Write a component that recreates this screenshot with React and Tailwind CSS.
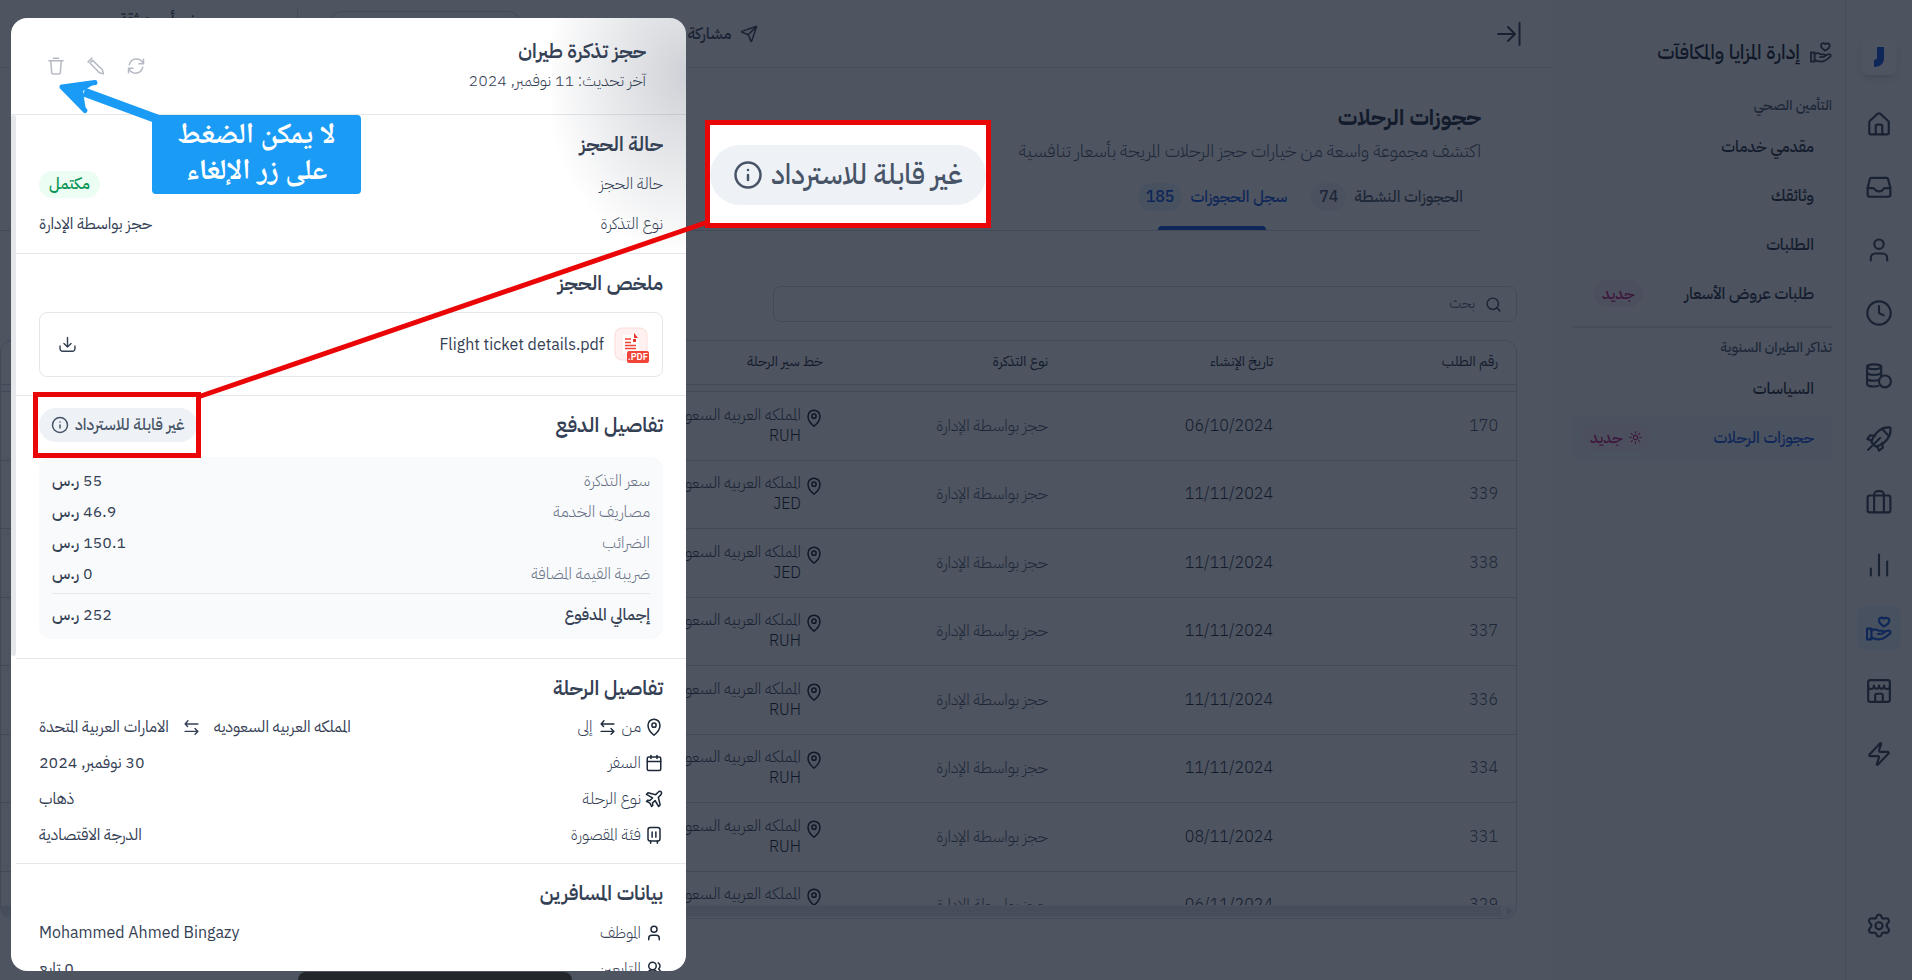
import {
  Calendar,
  ChartNoAxesColumn,
  Clock,
  Info,
  Search,
  Send,
  User,
  UsersRound,
  Zap,
} from 'lucide-react';

function Svg({ size = 26, width = 2, className, children }) {
  return (
    <svg width={size} height={size} viewBox="0 0 24 24" fill="none" stroke="currentColor" strokeWidth={width} strokeLinecap="round" strokeLinejoin="round" className={className}>
      {children}
    </svg>
  );
}

function HomeIcon() {
  return (
    <Svg>
      <path d="M3 10.5a2 2 0 0 1 .7-1.5l7-6.3a2 2 0 0 1 2.600 0l7 6.300a2 2 0 0 1 .7 1.500V20a1.500 1.500 0 0 1-1.500 1.500h-15A1.500 1.500 0 0 1 3 20z" />
      <path d="M9 21.500V14a1.500 1.500 0 0 1 1.500-1.500h3A1.500 1.500 0 0 1 15 14v7.500" />
    </Svg>
  );
}

function InboxIcon() {
  return (
    <Svg>
      <path d="M1.500 13h4.500c1.500 0 2 .5 2.500 1.500s1.500 1.500 3.500 1.500 3-.5 3.500-1.500S16.500 13 18 13h4.500" />
      <path d="M5 3.500h14a1.500 1.500 0 0 1 1.400 1l2.100 8.500v6a2 2 0 0 1-2 2h-17a2 2 0 0 1-2-2v-6l2.100-8.500a1.500 1.500 0 0 1 1.400-1z" />
    </Svg>
  );
}

function CoinsIcon() {
  return (
    <Svg>
      <ellipse cx="7.500" cy="3.500" rx="6.500" ry="2.200" />
      <path d="M1 3.500v16c0 1.200 3 2.200 6.500 2.200 1.500 0 2.700-.1 3.700-.4" />
      <path d="M14 3.500v8.500M1 8.800c0 1.200 3 2.200 6.500 2.200S14 10 14 8.800M1 14.200c0 1.200 3 2.200 6.500 2.200 1.400 0 2.500-.1 3.500-.4" />
      <circle cx="17.500" cy="17" r="5.500" />
    </Svg>
  );
}

function RocketIcon() {
  return (
    <Svg>
      <path d="M7.500 17.500 5 15c.8-3.500 3.500-8 7-10.800C15.500 1.500 19 1 22.500 1.500c.5 3.500 0 7-2.700 10.500C17 15.500 12.500 18.200 9 19z" />
      <path d="M8.500 9 4 8.500 1.200 12 5 13.500M15 15.500l.5 4.500-3.500 2.800L10.500 19M2 22l11-11M15.500 3.500l5 5" />
    </Svg>
  );
}

function BriefcaseIcon() {
  return (
    <Svg>
      <rect x="1.500" y="6" width="21" height="15.500" rx="2" />
      <path d="M7.500 21.500v-16A3.500 3.500 0 0 1 11 2h2a3.500 3.500 0 0 1 3.500 3.500v16" />
    </Svg>
  );
}

function HandHeartIcon({ size, width }) {
  return (
    <Svg size={size} width={width}>
      <path d="M16.500 10.500c-2.500-1.500-4.700-3.500-4.500-6 .2-2.200 2.700-2.800 4.300-1.200 2-1.300 5.200-.8 5.200 1.700 0 2.200-2.300 4.200-5 5.500z" />
      <rect x="1" y="12.500" width="4" height="10" />
      <path d="M5 14.500c2-1.500 4.500-1.500 6.500 0h3.500c2 0 2 2.500 0 2.700l-4 .3M16 16l3.800-1.500c2.200-.7 3.700 1.300 2 2.800C19 20 16 22.500 12 22.500c-3 0-4.500-1-7-1.500" />
    </Svg>
  );
}

function StoreIcon() {
  return (
    <Svg>
      <rect x="2" y="2" width="20" height="20" rx="2" />
      <path d="M2 7.500v1c0 2 3.500 2 4.500 1 .8-.6.8-1.500.8-2.500 0 1 .2 1.800 1.200 2.500s2.500.4 3-.5c.4-.5.5-1 .5-2 0 1 .1 1.500.5 2 .5.9 2 1.200 3 .5s1.200-1.500 1.200-2.500c0 1 0 1.900.8 2.500 1 1 4.500 1 4.500-1v-1M8.500 22v-6A1.500 1.500 0 0 1 10 14.500h4a1.500 1.500 0 0 1 1.500 1.500v6" />
    </Svg>
  );
}

function GearIcon() {
  return (
    <Svg>
      <path d="M9.800 3.200c.6-2.300 3.800-2.300 4.400 0 .3 1.400 1.700 2.200 3.100 1.900l1-.2c2.300-.4 3.900 2.300 2.300 4l-.7.800c-1 1.100-1 2.700 0 3.800l.7.800c1.600 1.700 0 4.400-2.300 4l-1-.2c-1.400-.3-2.800.5-3.100 1.900-.6 2.300-3.800 2.300-4.400 0-.3-1.400-1.700-2.200-3.100-1.900l-1 .2c-2.300.4-3.900-2.300-2.300-4l.7-.8c1-1.100 1-2.700 0-3.800l-.7-.8c-1.600-1.700 0-4.400 2.300-4l1 .2c1.400.3 2.800-.5 3.100-1.900z" />
      <circle cx="12" cy="11.800" r="3.300" />
    </Svg>
  );
}

function SparkIcon() {
  return (
    <Svg size={13}>
      <circle cx="12" cy="12" r="4" />
      <path d="M12 1v3M12 20v3M1 12h3M20 12h3M4.200 4.200l2 2M17.800 17.800l2 2M4.200 19.800l2-2M17.800 6.200l2-2" />
    </Svg>
  );
}

function PinIcon() {
  return (
    <Svg size={18}>
      <path d="M12 23s8-6.500 8-13.500a8 8 0 0 0-16 0C4 16.500 12 23 12 23z" />
      <circle cx="12" cy="9.500" r="2.800" />
    </Svg>
  );
}

function SwapIcon() {
  return (
    <Svg size={17}>
      <path d="M21 7H3M7 2.500 3 7l3.500 3.500M3 17.500h18M17 13.500l4 4-4 4" />
    </Svg>
  );
}

function PlaneIcon() {
  return (
    <Svg size={18}>
      <path d="M21.500 2.500c-1-1-3-.5-4 .5l-3.200 3.200L4 3.800 2 5.800l8 4.800-3.500 3.500-3-.5L2 15.200l4.500 2.300L8.800 22l1.600-1.500-.5-3 3.500-3.500 4.800 8 2-2-2.400-10.300L21 6.500c1-1 1.500-3 .5-4z" />
    </Svg>
  );
}

function SeatIcon() {
  return (
    <Svg size={18}>
      <rect x="4" y="2" width="16" height="18" rx="3" />
      <path d="M9.500 8v7M14.500 8v7M7.500 20v3M16.500 20v3" />
    </Svg>
  );
}

const railIcons = [
  { label: 'الرئيسية', icon: <HomeIcon /> },
  { label: 'الوارد', icon: <InboxIcon /> },
  { label: 'الموظفون', icon: <User size={28} strokeWidth={1.8} /> },
  { label: 'الحضور', icon: <Clock size={28} strokeWidth={1.8} /> },
  { label: 'الرواتب', icon: <CoinsIcon /> },
  { label: 'الأداء', icon: <RocketIcon /> },
  { label: 'التوظيف', icon: <BriefcaseIcon /> },
  { label: 'التقارير', icon: <ChartNoAxesColumn size={28} strokeWidth={1.8} /> },
  { label: 'المزايا', icon: <HandHeartIcon />, active: true },
  { label: 'المتجر', icon: <StoreIcon /> },
  { label: 'الأتمتة', icon: <Zap size={26} strokeWidth={2} /> },
];

const bookings = [
  ['170', '06/10/2024', 'RUH'],
  ['339', '11/11/2024', 'JED'],
  ['338', '11/11/2024', 'JED'],
  ['337', '11/11/2024', 'RUH'],
  ['336', '11/11/2024', 'RUH'],
  ['334', '11/11/2024', 'RUH'],
  ['331', '08/11/2024', 'RUH'],
  ['329', '06/11/2024', 'RUH'],
];

const prices = [
  ['سعر التذكرة', '55'],
  ['مصاريف الخدمة', '46.9'],
  ['الضرائب', '150.1'],
  ['ضريبة القيمة المضافة', '0'],
];

function Rail() {
  return (
    <nav className="flex w-[67px] shrink-0 flex-col items-center border-e border-gray-200 bg-gray-50 pt-[39px] text-[#344054]">
      <a href="#" aria-label="Jisr" className="flex size-9 items-center justify-center rounded-lg bg-white shadow-md">
        <svg width="14" height="20" viewBox="0 0 14 20">
          <path d="M5 0h7v11c0 5-3 9-10 9v-7c2 0 3-1 3-3z" fill="#0b4fe0" />
        </svg>
      </a>
      <div className="mt-[27px] flex flex-col gap-[19px]">
        {railIcons.map((item) => (
          <button
            key={item.label}
            aria-label={item.label}
            className={item.active ? 'flex size-11 items-center justify-center rounded-lg bg-[#e8f1fb] text-[#0b4fe0]' : 'flex size-11 items-center justify-center'}
          >
            {item.icon}
          </button>
        ))}
      </div>
      <button aria-label="الإعدادات" className="mt-auto mb-8 flex size-11 items-center justify-center">
        <GearIcon />
      </button>
    </nav>
  );
}

function NavItem({ label, badge, active }) {
  return (
    <a
      href="#"
      className={active
        ? 'flex h-[45px] items-center justify-between rounded-lg bg-[#edf3fb] ps-[18px] pe-[10px] text-[#0b4fe0]'
        : 'flex h-[45px] items-center justify-between rounded-lg ps-[18px] pe-[22px] text-[#1d2939]'}
    >
      <span>{label}</span>
      {badge && (
        <span className="flex h-[27px] items-center gap-1.5 rounded-full bg-[#f8ebf4] px-2 text-[#c11574]">
          {active && <SparkIcon />}
          {badge}
        </span>
      )}
    </a>
  );
}

function Sidebar() {
  return (
    <aside className="w-[292px] shrink-0 bg-gray-50 ps-[13px] pe-[19px] pt-9 text-base font-medium">
      <h2 className="flex h-8 items-center gap-2.5 text-xl text-[#101828]">
        <span className="text-[#344054]"><HandHeartIcon size={22} /></span>
        إدارة المزايا والمكافآت
      </h2>
      <h3 className="mt-7 flex h-5 items-center text-sm text-[#475467]">التأمين الصحي</h3>
      <div className="mt-2 flex flex-col gap-1">
        <NavItem label="مقدمي خدمات" />
        <NavItem label="وثائقك" />
        <NavItem label="الطلبات" />
        <NavItem label="طلبات عروض الأسعار" badge="جديد" />
      </div>
      <hr className="mt-2.5 border-t-2 border-gray-200" />
      <h3 className="mt-2.5 flex h-5 items-center text-sm text-[#475467]">تذاكر الطيران السنوية</h3>
      <div className="mt-2 flex flex-col gap-1">
        <NavItem label="السياسات" />
        <NavItem label="حجوزات الرحلات" badge="جديد" active />
      </div>
    </aside>
  );
}

function TopBar() {
  return (
    <header className="flex h-[68px] shrink-0 items-center border-b border-gray-200 ps-8 text-base font-medium text-[#344054]">
      <button aria-label="طي القائمة">
        <Svg size={24}>
          <path d="M1 12h17M11 5l7 7-7 7M22.500 1v22" />
        </Svg>
      </button>
      <div className="flex-1" />
      <button className="flex items-center gap-2">
        <Send size={18} strokeWidth={2} />
        مشاركة
      </button>
      <div className="ms-[168px] h-[46px] w-[190px] rounded-xl border border-gray-300" />
      <div className="ms-8 h-[50px] w-px bg-gray-300" />
      <div className="ms-[102px] me-[119px] self-start pt-2">نور أحمد ثقة</div>
    </header>
  );
}

function BookingsTable() {
  return (
    <div className="flex h-[579px] flex-col overflow-hidden rounded-xl border border-gray-300 pb-px">
      <div className="flex-1 overflow-hidden">
        <table className="w-full table-fixed text-start text-base font-light text-[#344054]">
          <thead className="border-b border-gray-300 text-sm font-normal text-[#1d2939]">
            <tr className="h-[43px]">
              {['رقم الطلب', 'تاريخ الإنشاء', 'نوع التذكرة', 'خط سير الرحلة'].map((head) => (
                <th key={head} className="w-[225px] ps-[18px] text-start font-normal">{head}</th>
              ))}
              <th aria-label="الحالة" />
            </tr>
          </thead>
          <tbody>
            <tr className="h-[7px] border-b border-gray-300"><td colSpan={5} /></tr>
            {bookings.map(([id, date, code]) => (
              <tr key={id} className="h-[69px] border-b border-gray-300 odd:h-[68px]">
                <td className="ps-[18px] text-[#475467]">{id}</td>
                <td className="ps-[18px] text-[#1d2939]">{date}</td>
                <td className="ps-[18px] text-[#475467]">حجز بواسطة الإدارة</td>
                <td className="ps-[18px] whitespace-nowrap">
                  <div className="flex gap-1 leading-[21px]">
                    <span className="pt-1 text-[#101828]"><PinIcon /></span>
                    <div>
                      المملكه العربيه السعوديه
                      <div className="text-[#101828]">{code}</div>
                    </div>
                  </div>
                </td>
                <td />
              </tr>
            ))}
          </tbody>
        </table>
      </div>
      <div className="flex h-3 shrink-0 items-center gap-1.5 bg-gray-100 ps-1">
        <svg width="5" height="8" viewBox="0 0 5 8"><path d="M0 0l5 4-5 4z" fill="#d0d5dd" /></svg>
        <div className="h-2.5 flex-1 bg-gray-200" />
      </div>
    </div>
  );
}

function Main() {
  return (
    <main className="flex min-w-0 flex-1 flex-col bg-white">
      <TopBar />
      <div className="ps-9 pt-[33px]">
        <div className="ps-9">
          <h1 className="flex h-8 items-center text-[22px] font-bold text-[#1d2939]">حجوزات الرحلات</h1>
          <p className="mt-0.5 flex h-8 items-center text-lg font-light text-[#475467]">اكتشف مجموعة واسعة من خيارات حجز الرحلات المريحة بأسعار تنافسية</p>
          <div role="tablist" className="flex h-16 items-start gap-6 border-b border-gray-300 ps-[18px] pt-4 text-base font-medium">
            <button role="tab" className="flex h-7 items-center gap-2 text-[#475467]">
              الحجوزات النشطة
              <span className="rounded-full bg-gray-100 px-2 leading-7">74</span>
            </button>
            <button role="tab" aria-selected="true" className="flex h-[47px] flex-col items-center justify-between text-[#0b4fe0]">
              <span className="flex items-center gap-2">
                سجل الحجوزات
                <span className="rounded-full bg-[#e8f1fb] px-2 leading-7">185</span>
              </span>
              <span className="h-1 w-[108px] rounded-t-sm bg-[#0b4fe0]" />
            </button>
          </div>
        </div>
        <label className="mt-[55px] me-[773px] flex h-9 items-center gap-2.5 rounded-lg border border-gray-300 ps-3.5 text-[#344054]">
          <Search size={17} strokeWidth={2} />
          <input type="search" placeholder="بحث" className="flex-1 text-sm outline-none placeholder:text-[#667085]" />
        </label>
        <div className="mt-[18px]">
          <BookingsTable />
        </div>
      </div>
    </main>
  );
}

function Section({ title, aside, children, className }) {
  return (
    <section className={className}>
      <div className="flex h-9 items-center justify-between">
        <h3 className="text-xl font-semibold text-[#344054]">{title}</h3>
        {aside}
      </div>
      {children}
    </section>
  );
}

function DetailRow({ icon, label, children }) {
  return (
    <div className="flex h-9 items-center justify-between text-[#344054]">
      <dt className="flex items-center gap-1">
        {icon && <span className="text-[#1d2939]">{icon}</span>}
        <span className="flex items-center gap-1.5 font-light">{label}</span>
      </dt>
      <dd className="flex items-center">{children}</dd>
    </div>
  );
}

function Price({ amount }) {
  return (
    <dd className="font-medium text-[#344054]">
      <span className="font-normal">{amount}</span> ر.س
    </dd>
  );
}

function Drawer() {
  return (
    <div role="dialog" aria-label="حجز تذكرة طيران" className="absolute top-[18px] bottom-[9px] left-[11px] flex w-[675px] flex-col overflow-hidden rounded-2xl bg-white text-base">
      <div className="pointer-events-none absolute top-0 right-0 h-[230px] w-[134px] bg-[radial-gradient(ellipse_at_100%_25%,rgba(52,64,84,0.24),rgba(52,64,84,0)_75%)]" />
      <div className="flex h-[97px] shrink-0 justify-between border-b border-gray-200 ps-10 pe-9 pt-[17px]">
        <div>
          <h2 className="flex h-8 items-center text-xl font-semibold text-[#344054]">حجز تذكرة طيران</h2>
          <p className="flex h-7 items-center font-light text-[#344054]">آخر تحديث: 11 نوفمبر, 2024</p>
        </div>
        <div className="flex h-[62px] items-center gap-[22px] text-[#b4b9c3]">
          <button aria-label="تحديث">
            <Svg size={18}>
              <path d="M22 3v6h-6M2 21v-6h6M22 9C20 5 17 2.500 12.500 2.500 7.500 2.500 4 6 3 10.500M2 15c2 4 5 6.500 9.500 6.500 5 0 8.500-3.500 9.500-8" />
            </Svg>
          </button>
          <button aria-label="تعديل">
            <Svg size={18}>
              <path d="M7.500 4.500 20.500 17l1.500 5.500-5.500-1.500L4 8zM1.500 6.500l5-5" />
            </Svg>
          </button>
          <button aria-label="حذف" disabled>
            <Svg size={18}>
              <path d="M2.500 5h19M8.500 1.500h7M5 5l1.200 15.500a2 2 0 0 0 2 2h7.600a2 2 0 0 0 2-2L19 5" />
            </Svg>
          </button>
        </div>
      </div>
      <div className="flex min-h-0 flex-1">
        <div className="min-w-0 flex-1 overflow-hidden">
          <Section title="حالة الحجز" className="h-[139px] border-b border-gray-200 px-[23px] pt-[11px]">
            <dl className="flex flex-col gap-1 pt-1">
              <DetailRow label="حالة الحجز">
                <span className="rounded-full bg-[#ecfdf3] px-2.5 leading-[27px] font-medium text-[#079455]">مكتمل</span>
              </DetailRow>
              <DetailRow label="نوع التذكرة">حجز بواسطة الإدارة</DetailRow>
            </dl>
          </Section>
          <Section title="ملخص الحجز" className="h-[142px] border-b border-gray-200 px-[23px] pt-[11px]">
            <div className="mt-[11px] flex h-[65px] items-center justify-between rounded-lg border border-gray-200 ps-3 pe-[19px]">
              <a href="#" className="flex items-center gap-2.5 text-[#344054]">
                <svg width="36" height="38" viewBox="0 0 36 38" fill="none" direction="ltr">
                  <rect x="1" y="2" width="32" height="32" rx="7" fill="#fef1f0" stroke="#fbdcd9" />
                  <path d="M9 9h11l5 5v13H9z" fill="#fff" />
                  <path d="M11 13h6M11 16.500h6M11 19.500h11M11 22.500h11" stroke="#f04438" strokeWidth="1.400" />
                  <path d="M20 7v5h4zM19 13h3v3h-3z" fill="#e5362a" />
                  <rect x="13" y="25" width="22" height="12" rx="2" fill="#f04438" />
                  <text x="24" y="34" textAnchor="middle" fontSize="9" fontWeight="600" fill="#fff">.PDF</text>
                </svg>
                <span dir="ltr">Flight ticket details.pdf</span>
              </a>
              <button aria-label="تنزيل" className="text-[#344054]">
                <Svg size={17}>
                  <path d="M12 2v13M7 10.500l5 5 5-5M1.500 14v4a3.500 3.500 0 0 0 3.500 3.500h14a3.500 3.500 0 0 0 3.500-3.500v-4" />
                </Svg>
              </button>
            </div>
          </Section>
          <Section
            title="تفاصيل الدفع"
            className="h-[263px] border-b border-gray-200 px-[23px] pt-[11px]"
            aside={
              <span className="flex h-[34px] items-center gap-1.5 rounded-full bg-[#eef1f6] px-3 font-medium text-[#475467]">
                غير قابلة للاسترداد
                <Info size={18} strokeWidth={2} />
              </span>
            }
          >
            <dl className="mt-[14px] rounded-xl bg-[#f9fafb] px-[13px] pt-2 pb-1">
              {prices.map(([label, amount]) => (
                <div key={label} className="flex h-[31px] items-center justify-between">
                  <dt className="font-light text-[#667085]">{label}</dt>
                  <Price amount={amount} />
                </div>
              ))}
              <div className="mt-1 flex h-[42px] items-center justify-between border-t border-gray-200">
                <dt className="font-medium text-[#344054]">إجمالي المدفوع</dt>
                <Price amount="252" />
              </div>
            </dl>
          </Section>
          <Section title="تفاصيل الرحلة" className="h-[205px] border-b border-gray-200 px-[23px] pt-[11px]">
            <dl className="pt-[3px]">
              <DetailRow icon={<PinIcon />} label={<>من <span className="text-[#1d2939]"><SwapIcon /></span> إلى</>}>
                <span>المملكه العربيه السعوديه</span>
                <span className="mx-3.5"><SwapIcon /></span>
                <span>الامارات العربية المتحدة</span>
              </DetailRow>
              <DetailRow icon={<Calendar size={18} />} label="السفر">30 نوفمبر, 2024</DetailRow>
              <DetailRow icon={<PlaneIcon />} label="نوع الرحلة">ذهاب</DetailRow>
              <DetailRow icon={<SeatIcon />} label="فئة المقصورة">الدرجة الاقتصادية</DetailRow>
            </dl>
          </Section>
          <Section title="بيانات المسافرين" className="px-[23px] pt-[11px]">
            <dl className="pt-1">
              <DetailRow icon={<User size={18} />} label="الموظف">Mohammed Ahmed Bingazy</DetailRow>
              <DetailRow icon={<UsersRound size={18} />} label="التابعين">0 تابع</DetailRow>
            </dl>
          </Section>
        </div>
        <div className="w-[5px] shrink-0">
          <div className="h-[541px] rounded-sm bg-gray-200" />
        </div>
      </div>
    </div>
  );
}

function Callouts() {
  return (
    <>
      <svg className="pointer-events-none absolute top-0 left-0 h-[460px] w-[1000px]" fill="none">
        <path d="M198 397 708 222" stroke="#ea0606" strokeWidth="5" />
        <path d="M168 123 84 92" stroke="#1a9bf5" strokeWidth="9" />
        <path d="M95 82.500 62 87 85 110.500" stroke="#1a9bf5" strokeWidth="5" strokeLinecap="round" strokeLinejoin="round" />
        <path d="M63 87 96 83 83 91 86 111z" fill="#1a9bf5" />
      </svg>
      <div className="pointer-events-none absolute top-[392px] left-[33px] h-[66px] w-[168px] border-5 border-[#ea0606]" />
      <div className="absolute top-[120px] left-[705px] flex h-[108px] w-[286px] items-center justify-center border-5 border-[#ea0606] bg-white pt-0.5">
        <span className="flex h-[60px] w-full items-center justify-center gap-2 rounded-full bg-[#eef1f6] text-[28px] font-medium whitespace-nowrap text-[#475467]">
          غير قابلة للاسترداد
          <Info size={30} strokeWidth={2} />
        </span>
      </div>
      <p className="absolute top-[115px] left-[152px] flex h-[79px] w-[209px] flex-col items-center justify-center rounded-sm bg-[#1a9bf5] font-['Noto_Naskh_Arabic','DejaVu_Sans',sans-serif] text-[29px] leading-9 font-bold text-white">
        <span>لا يمكن الضغط</span>
        <span>على زر الإلغاء</span>
      </p>
    </>
  );
}

export default function App() {
  return (
    <div dir="rtl" lang="ar" className="relative flex h-screen overflow-hidden bg-white font-['IBM_Plex_Sans_Arabic','IBM_Plex_Sans','Noto_Sans',sans-serif] [font-feature-settings:'dlig']">
      <Rail />
      <Sidebar />
      <Main />
      <div className="absolute inset-0 bg-[#101828]/74" />
      <Drawer />
      <div className="absolute bottom-0 left-[298px] h-2 w-[274px] rounded-t-xl bg-[#23272c]" />
      <Callouts />
    </div>
  );
}
